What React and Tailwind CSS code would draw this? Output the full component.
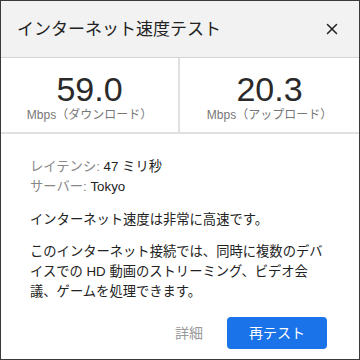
import { X } from 'lucide-react';

// Speed test result dialog (Japanese locale)
export default function App(){
  const font = { fontFamily: '"Liberation Sans", "Noto Sans CJK JP", sans-serif' };
  return <div className="w-[360px] h-[360px] bg-white border border-[#3a3a3a] flex flex-col overflow-hidden" style={font}>
    <div className="h-[57px] shrink-0 bg-[#f2f2f2] border-b border-[#d6d6d6] flex items-center justify-between pl-4 pr-[18px]">
      <span className="text-[17px] text-[#222] pt-[2px]">インターネット速度テスト</span>
      <X size={18} strokeWidth={2} className="text-[#222]" />
    </div>
    <div className="h-[76px] shrink-0 grid grid-cols-2 border-b-2 border-[#e0e0e0]">
      <Stat value="59.0" label="Mbps（ダウンロード）" className="border-r-2 border-[#e0e0e0]" />
      <Stat value="20.3" label="Mbps（アップロード）" />
    </div>
    <div className="flex-1 px-[29px] pt-[23px] text-[13.3px] text-[#222]">
      <div className="leading-[20px]"><span className="text-[#888]">レイテンシ:</span> 47 ミリ秒</div>
      <div className="leading-[20px]"><span className="text-[#888]">サーバー:</span> Tokyo</div>
      <p className="mt-[13px] leading-[20px]">インターネット速度は非常に高速です。</p>
      <p className="mt-[12px] leading-[20px]">このインターネット接続では、同時に複数のデバ<br/>イスでの HD 動画のストリーミング、ビデオ会<br/>議、ゲームを処理できます。</p>
      <div className="mt-[15px] flex items-center justify-end gap-[24px] pr-[3px]">
        <span className="text-[14px] text-[#999]">詳細</span>
        <button className="w-[100px] h-[32px] rounded-[4px] bg-[#1a73e8] text-white text-[14px]">再テスト</button>
      </div>
    </div>
  </div>;
}

function Stat({ value, label, className='' }){
  return <div className={`flex flex-col items-center justify-center ${className}`}>
    <div className="text-[34px] leading-[34px] text-[#2a2a2a] mt-[3px]">{value}</div>
    <div className="text-[12px] text-[#777] leading-[14px] mt-[2px]">{label}</div>
  </div>;
}
